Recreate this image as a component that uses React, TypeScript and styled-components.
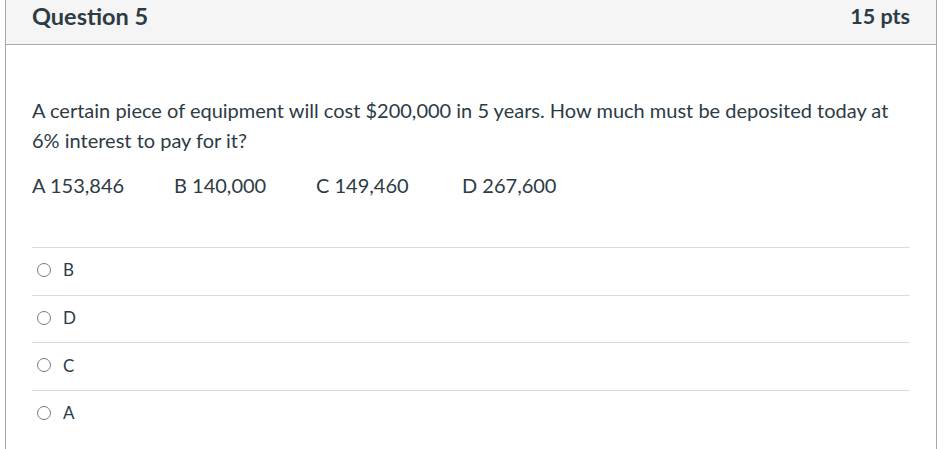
import React from 'react';
import styled, { createGlobalStyle } from 'styled-components';

const GlobalStyle = createGlobalStyle`
  body {
    margin: 0;
    background: #fff;
    font-family: Lato, "Open Sans", sans-serif;
    color: #2d3b45;
  }
`;

const Card = styled.div`
  margin-left: 5px;
  width: 930px;
  min-height: 449px;
  border-left: 1px solid #a9a9a9;
  border-right: 1px solid #a9a9a9;
`;

const Header = styled.div`
  display: flex;
  align-items: flex-start;
  justify-content: space-between;
  height: 45px;
  padding: 1px 26px 0;
  box-sizing: border-box;
  background: #f5f5f5;
  border-bottom: 1px solid #a9a9a9;
`;

const Title = styled.h2`
  margin: 0;
  font-size: 23.5px;
  line-height: 30px;
  font-weight: 700;
  color: #2d3b45;
`;

const Points = styled.div`
  font-size: 21.5px;
  line-height: 30px;
  font-weight: 700;
  color: #2d3b45;
`;

const Body = styled.div`
  padding: 50px 26px 0;
`;

const Text = styled.p`
  margin: 0 0 15px;
  font-size: 20px;
  line-height: 30px;
`;

const Choices = styled.div`
  display: grid;
  grid-template-columns: 142px 142px 146px auto;
  font-size: 20px;
  line-height: 30px;
  margin-bottom: 47px;
`;

const List = styled.div`
  display: flex;
  flex-direction: column;
`;

const Option = styled.label`
  display: flex;
  align-items: center;
  gap: 12px;
  height: 47.7px;
  padding: 0 0 3px 5px;
  box-sizing: border-box;
  border-top: 1px solid #dcdcdc;
  font-size: 17px;
`;

const Radio = styled.span`
  width: 12px;
  height: 12px;
  border-radius: 50%;
  border: 1px solid #7a7a7a;
`;

const options = ['B', 'D', 'C', 'A'];
const choices = ['A 153,846', 'B 140,000', 'C 149,460', 'D 267,600'];

export default function App() {
  return (
    <>
      <GlobalStyle />
      <Card>
        <Header>
          <Title>Question 5</Title>
          <Points>15 pts</Points>
        </Header>
        <Body>
          <Text>
            A certain piece of equipment will cost $200,000 in 5 years. How much must be deposited today at 6%
            interest to pay for it?
          </Text>
          <Choices>
            {choices.map(c => (
              <span key={c}>{c}</span>
            ))}
          </Choices>
          <List>
            {options.map(o => (
              <Option key={o}>
                <Radio />
                {o}
              </Option>
            ))}
          </List>
        </Body>
      </Card>
    </>
  );
}
